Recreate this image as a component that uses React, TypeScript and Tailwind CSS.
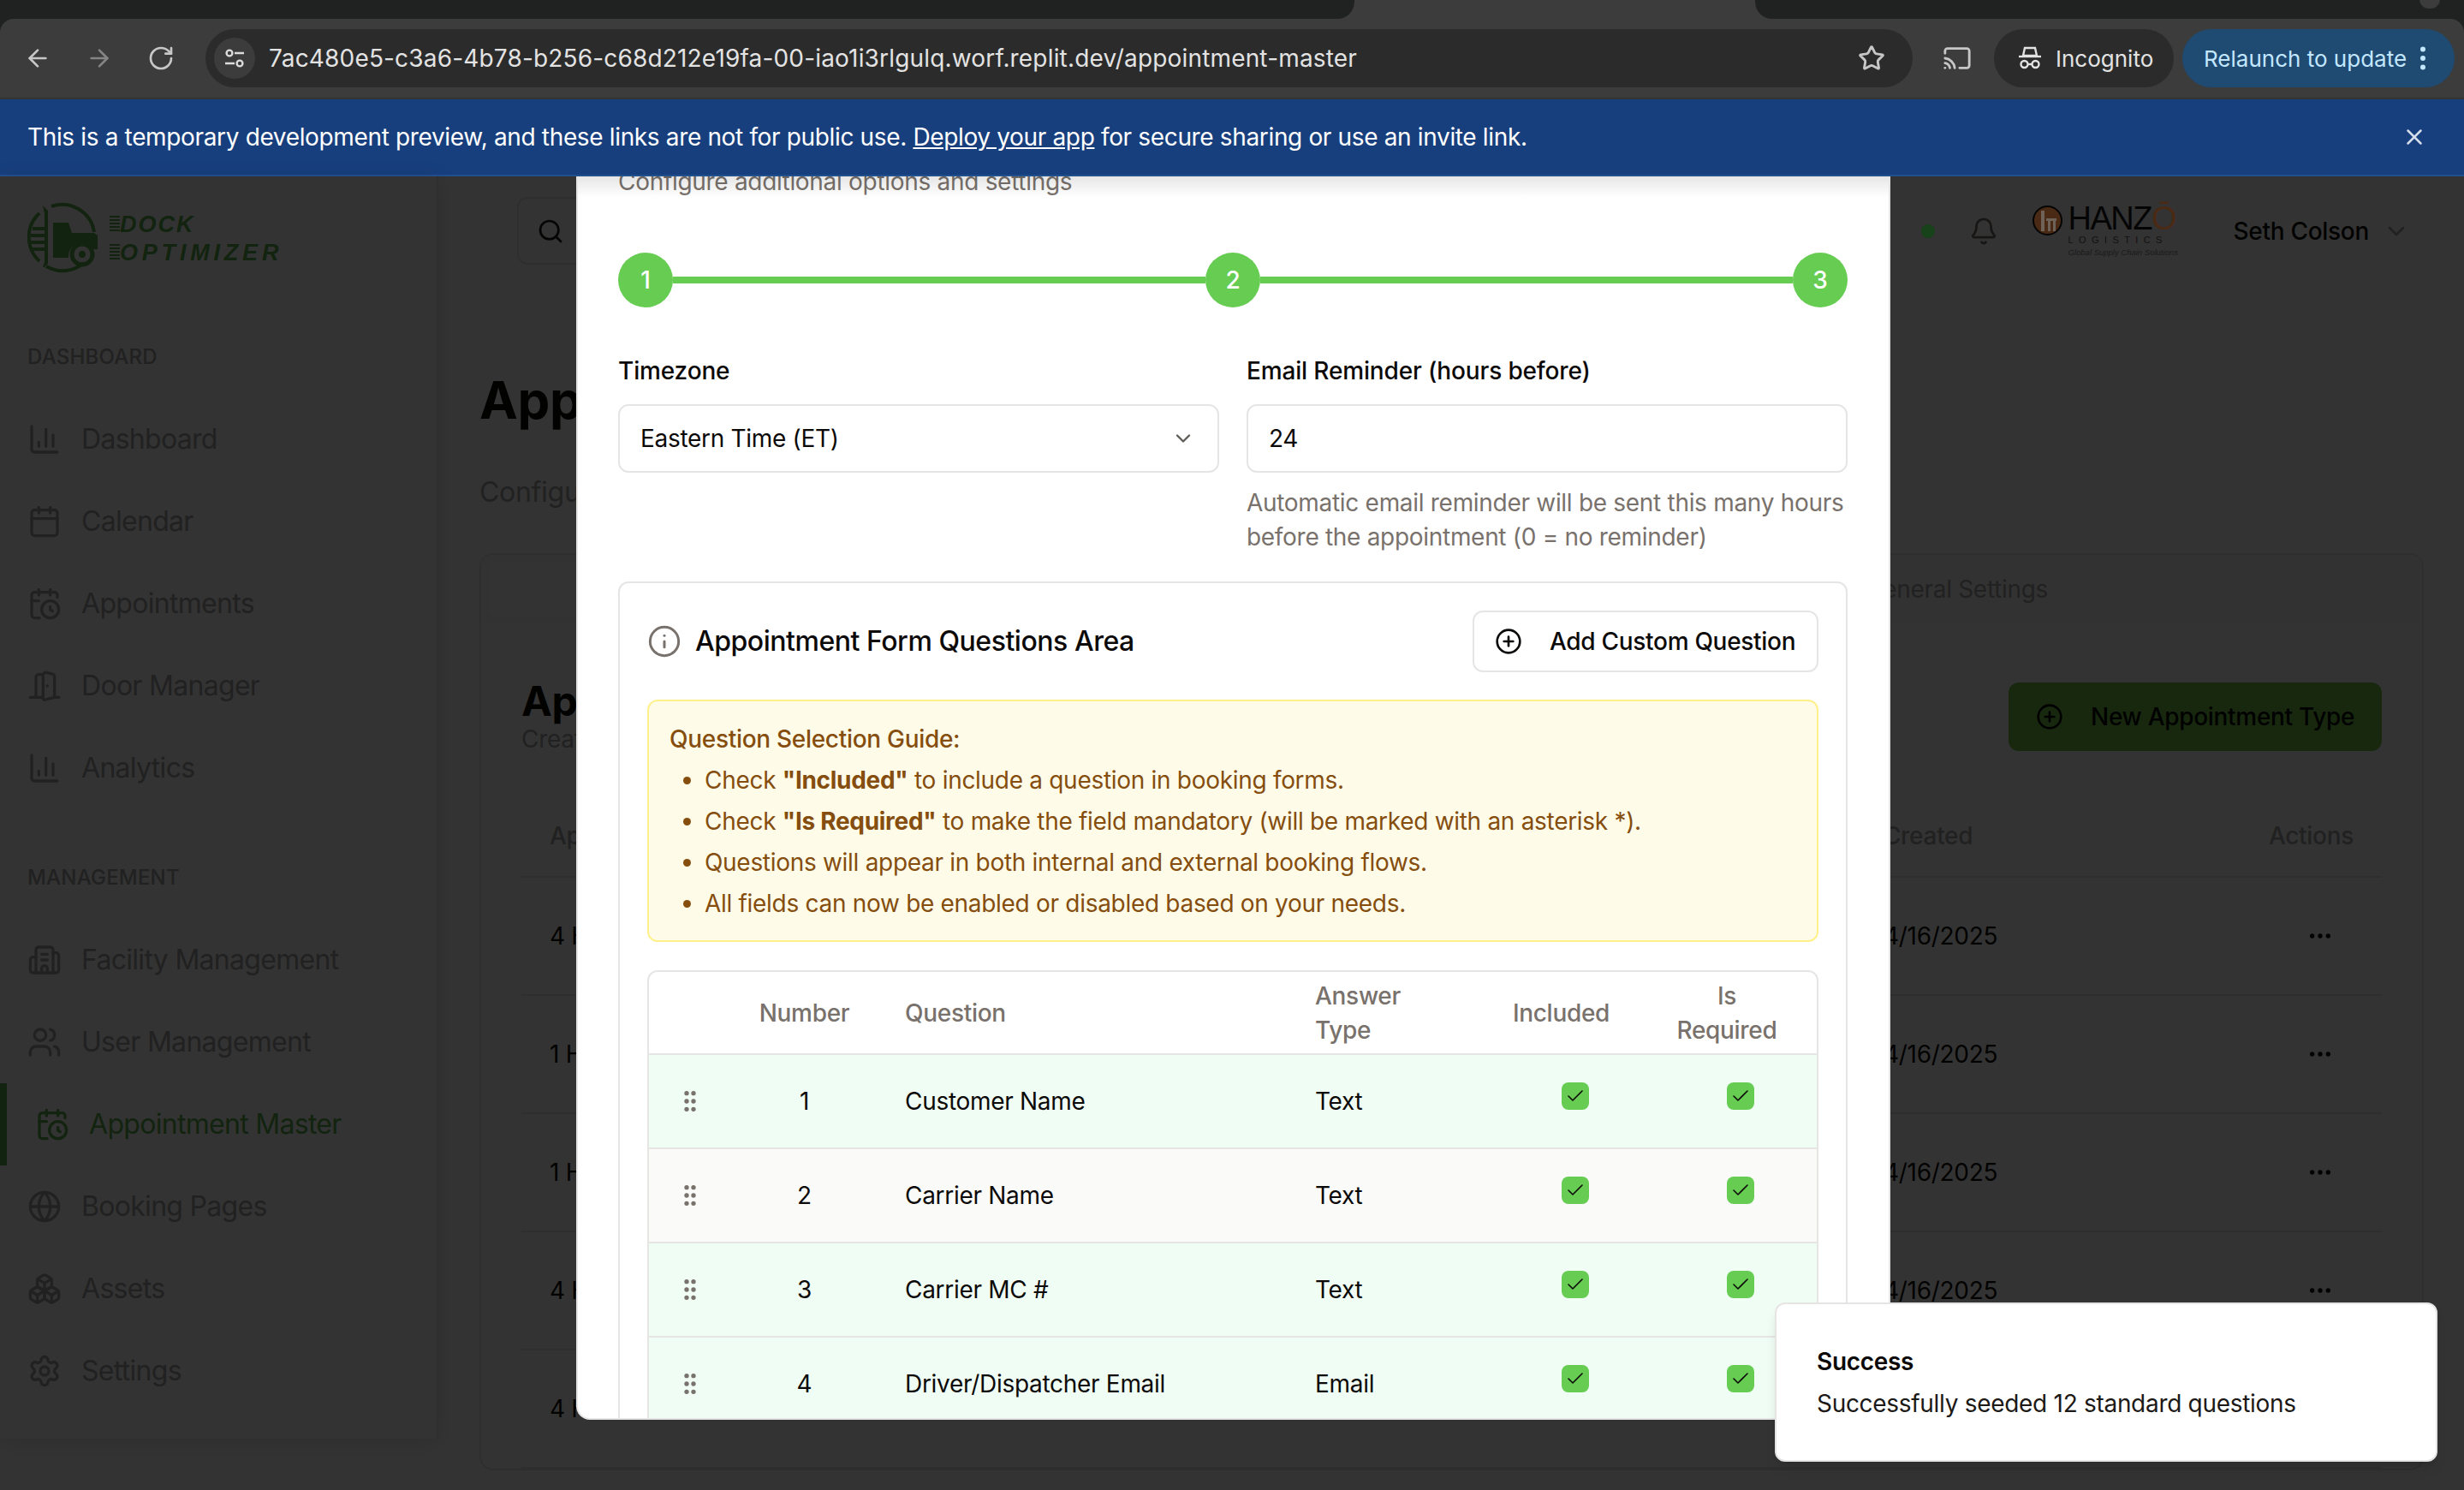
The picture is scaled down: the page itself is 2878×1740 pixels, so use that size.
import {
  ArrowLeft,
  ArrowRight,
  RotateCw,
  Star,
  Cast,
  EllipsisVertical,
  X,
  Search,
  Bell,
  ChevronDown,
  ChartColumn,
  Calendar,
  CalendarClock,
  DoorOpen,
  Building2,
  Users,
  Globe,
  Boxes,
  Settings,
  CirclePlus,
  Info,
  GripVertical,
  Check,
  Ellipsis,
} from 'lucide-react'

const mainNav = [
  { label: 'Dashboard', icon: ChartColumn },
  { label: 'Calendar', icon: Calendar },
  { label: 'Appointments', icon: CalendarClock },
  { label: 'Door Manager', icon: DoorOpen },
  { label: 'Analytics', icon: ChartColumn },
]

const manageNav = [
  { label: 'Facility Management', icon: Building2 },
  { label: 'User Management', icon: Users },
  { label: 'Appointment Master', icon: CalendarClock, active: true },
  { label: 'Booking Pages', icon: Globe },
  { label: 'Assets', icon: Boxes },
  { label: 'Settings', icon: Settings },
]

const typeRows = ['4 Hour Container', '1 Hour Trailer', '1 Hour Live Load', '4 Hour Drop', '4 Hour Reefer']

const questions = [
  { n: 1, q: 'Customer Name', type: 'Text', bg: 'bg-[#f0fdf4]' },
  { n: 2, q: 'Carrier Name', type: 'Text', bg: 'bg-[#fafaf9]' },
  { n: 3, q: 'Carrier MC #', type: 'Text', bg: 'bg-[#f0fdf4]' },
  { n: 4, q: 'Driver/Dispatcher Email', type: 'Email', bg: 'bg-[#f0fdf4]' },
]

function NavItem({ label, icon: Icon, active }: { label: string; icon: typeof Globe; active?: boolean }) {
  if (active) {
    return (
      <div className="flex h-[96px] items-center gap-[23px] border-l-[8px] border-[#5cb04a] pl-[33px] text-[#5cb04a]">
        <Icon size={40} strokeWidth={2} />
        <span className="text-[32px] tracking-[-0.7px]">{label}</span>
      </div>
    )
  }
  return (
    <div className="flex h-[96px] items-center gap-[23px] pl-[32px] text-[#a3a3a3]">
      <Icon size={40} strokeWidth={2} />
      <span className="text-[32px] tracking-[-0.7px]">{label}</span>
    </div>
  )
}

function TruckMark() {
  return (
    <svg width="84" height="84" viewBox="0 0 84 84" fill="none">
      <path d="M28 6 A38 38 0 0 1 78 36" stroke="#5cb04a" strokeWidth="4" />
      <path d="M14 14 A38 38 0 0 0 14 70 M22 76 A38 38 0 0 0 66 72" stroke="#5cb04a" strokeWidth="4" />
      <path d="M6 30h18v4H6zM4 38h20v4H4zM4 46h20v4H4zM6 54h18v4H6z" fill="#5cb04a" />
      <path d="M18 5l6 6v62l-4 4h-2l2-6V15z" fill="#5cb04a" />
      <path d="M30 25h18l4 12h26l4 3v16h-6a15 15 0 0 0-28 8v2H30z" fill="#5cb04a" />
      <circle cx="64" cy="62" r="12" stroke="#5cb04a" strokeWidth="5" />
      <circle cx="64" cy="62" r="4" fill="#5cb04a" />
    </svg>
  )
}

function DockLogo() {
  const speed = 'h-[20px] w-[12px] bg-[repeating-linear-gradient(180deg,#5cb04a_0_2px,transparent_2px_4px)]'
  return (
    <div className="flex items-center gap-[12px] pl-[32px]">
      <TruckMark />
      <div className="mt-[4px] flex flex-col gap-[12px] [font-family:'Liberation_Sans',sans-serif] text-[27px] leading-[21px] font-bold text-[#5cb04a] italic">
        <div className="flex items-center">
          <span className={speed} />
          <span className="tracking-[2px]">DOCK</span>
        </div>
        <div className="flex items-center">
          <span className={speed} />
          <span className="tracking-[4.8px]">OPTIMIZER</span>
        </div>
      </div>
    </div>
  )
}

function HanzoLogo() {
  return (
    <div className="relative z-20 flex w-[173px] gap-[7px] [font-family:'Liberation_Sans',sans-serif] text-[#050505]">
      <svg width="35" height="35" viewBox="0 0 35 35" className="shrink-0">
        <circle cx="17.5" cy="17.5" r="16.5" fill="#4a2a14" stroke="#050505" strokeWidth="2" />
        <path d="M10 6h4v24h-4zM16 15h12v3H16zM18 18h3v12h-3zM24 18h3v12h-3z" fill="#6f6258" />
      </svg>
      <div className="w-[128px]">
        <div className="text-[38px] leading-[30px] tracking-[-1.5px]">
          HANZ<span className="text-[#4a2a14]">Ō</span>
        </div>
        <div className="mt-[5px] text-[11px] leading-[11px] tracking-[6.4px] text-[#111]">LOGISTICS</div>
        <div className="mt-[4px] text-[9.5px] leading-[10px] tracking-normal whitespace-nowrap text-[#1a1a1a] italic">Global Supply Chain Solutions</div>
      </div>
    </div>
  )
}

function BrowserChrome() {
  return (
    <div className="bg-[#202221]">
      <div className="flex h-[22px] bg-[#3c3c3c]">
        <div className="w-[1582px] rounded-br-[20px] bg-[#202221]" />
        <div className="w-[468px]" />
        <div className="relative flex-1 rounded-bl-[20px] bg-[#202221]">
          <div className="absolute top-[-12px] left-[776px] h-[22px] w-[24px] rounded-full bg-[#3c3c3c]" />
        </div>
      </div>
      <div className="flex h-[92px] items-center rounded-t-[16px] bg-[#3c3c3c] pl-[28px] text-[#c7c7c7]">
        <ArrowLeft size={32} />
        <ArrowRight size={32} className="ml-[40px] text-[#858585]" />
        <RotateCw size={32} className="ml-[40px]" />
        <div className="ml-[36px] flex h-[68px] w-[1994px] items-center rounded-full bg-[#2b2b2b] pl-[10px]">
          <div className="flex h-[48px] w-[48px] items-center justify-center rounded-full bg-[#3c3c3c]">
            <svg width="26" height="26" viewBox="0 0 26 26" fill="none" stroke="#dcdcdc" strokeWidth="2.4">
              <circle cx="7" cy="7" r="3.4" />
              <path d="M13 7h11M2 19h11" />
              <circle cx="19" cy="19" r="3.4" />
            </svg>
          </div>
          <span className="ml-[16px] text-[28px] tracking-[0.17px] text-[#e3e3e3]">
            7ac480e5-c3a6-4b78-b256-c68d212e19fa-00-iao1i3rlgulq.worf.replit.dev/appointment-master
          </span>
          <Star size={32} strokeWidth={2.2} className="mr-[32px] ml-auto" />
        </div>
        <Cast size={34} className="ml-[35px]" />
        <div className="ml-[26px] flex h-[68px] w-[210px] items-center rounded-full bg-[#2b2b2b] pl-[27px] text-[#e3e3e3]">
          <svg width="30" height="28" viewBox="0 0 30 28" fill="none" stroke="currentColor" strokeWidth="2.4">
            <path d="M9 2h12l2 9H7z" />
            <path d="M2 12h26" />
            <circle cx="8.5" cy="21" r="4" />
            <circle cx="21.5" cy="21" r="4" />
            <path d="M12.5 21h5" />
          </svg>
          <span className="ml-[15px] text-[26px] tracking-normal">Incognito</span>
        </div>
        <div className="ml-[10px] flex h-[68px] w-[318px] items-center rounded-full bg-[#1f4a72] pl-[25px] text-[#c2e7ff]">
          <span className="text-[26px] tracking-normal whitespace-nowrap">Relaunch to update</span>
          <EllipsisVertical size={36} className="ml-[1px]" />
        </div>
      </div>
      <div className="h-[2px] bg-[#333]" />
      <div className="flex h-[90px] items-center justify-between border-b-2 border-[#21508f] bg-[#183f7d] pr-[43px] pl-[32px] text-[28px] tracking-[-0.35px] text-white">
        <span>
          This is a temporary development preview, and these links are not for public use.{' '}
          <span className="underline">Deploy your app</span> for secure sharing or use an invite link.
        </span>
        <X size={30} className="text-[#d5dcea]" />
      </div>
    </div>
  )
}

function Sidebar() {
  return (
    <aside className="flex h-[1474px] w-[512px] shrink-0 flex-col border-r-2 border-[#e7e5e4] bg-white shadow-[0_4px_24px_rgba(0,0,0,0.12)]">
      <div className="flex h-[127px] items-center pt-[14px]">
        <DockLogo />
      </div>
      <div className="mt-[68px] mb-[32px] pl-[32px] text-[24px] leading-[32px] font-medium tracking-[0.2px] text-[#a3a3a3]">DASHBOARD</div>
      {mainNav.map((n) => (
        <NavItem key={n.label} {...n} />
      ))}
      <div className="mt-[64px] mb-[32px] pl-[32px] text-[24px] leading-[32px] font-medium tracking-[0.2px] text-[#a3a3a3]">MANAGEMENT</div>
      {manageNav.map((n) => (
        <NavItem key={n.label} {...n} />
      ))}
    </aside>
  )
}

function PageBehind() {
  return (
    <main className="min-w-0 flex-1">
      <header className="flex h-[127px] items-center justify-between pr-[63px] pl-[92px]">
        <div className="flex h-[79px] w-[700px] items-center rounded-[12px] border-2 border-[#e7e5e4] pl-[21px] text-[#1c1917]">
          <Search size={32} />
        </div>
        <div className="flex items-center">
          <span className="relative z-20 h-[16px] w-[16px] rounded-full bg-[#17421a]" />
          <Bell size={34} className="ml-[40px] text-[#78716c]" />
          <div className="ml-[40px]">
            <HanzoLogo />
          </div>
          <span className="ml-[62px] text-[28px] font-medium text-[#0c0a09]">Seth Colson</span>
          <ChevronDown size={32} className="ml-[16px] text-[#a3a3a3]" />
        </div>
      </header>
      <div className="pr-[47px] pl-[48px]">
        <h1 className="mt-[98px] text-[60px] leading-[72px] font-bold text-[#0c0a09]">Appointment Master</h1>
        <p className="mt-[48px] text-[32px] leading-[48px] text-[#a3a3a3]">Configure appointment types and scheduling rules</p>
        <section className="mt-[47px] rounded-[16px] border-2 border-[#e7e5e4]">
          <div className="flex h-[80px] items-center justify-between rounded-[12px] bg-[#fafaf9] pr-[437px] pl-[8px] text-[28px] text-[#a3a3a3]">
            <div className="flex h-[62px] w-[620px] items-center justify-center rounded-[10px] bg-white text-[#0c0a09]">Appointment Types</div>
            <span>General Settings</span>
          </div>
          <div className="flex items-start justify-between pt-[67px] pr-[47px] pl-[47px]">
            <div>
              <h2 className="text-[48px] leading-[48px] font-bold text-[#0c0a09]">Appointment Types</h2>
              <p className="text-[28px] leading-[40px] text-[#a3a3a3]">Create and manage appointment types</p>
            </div>
            <button className="mt-[2px] flex h-[80px] w-[436px] items-center gap-[32px] rounded-[12px] bg-[#73c84b] pl-[32px] text-[28px] font-medium text-[#050505]">
              <CirclePlus size={32} />
              New Appointment Type
            </button>
          </div>
          <div className="mx-[47px] mt-[46px]">
            <div className="flex h-[96px] items-center border-b-2 border-[#e7e5e4] px-[33px] text-[28px] font-medium text-[#a3a3a3]">
              <span className="flex-1">Appointment Type</span>
              <span className="w-[450px]">Created</span>
              <span>Actions</span>
            </div>
            {typeRows.map((r) => (
              <div key={r} className="flex h-[138px] items-center border-b-2 border-[#e7e5e4] pl-[33px] text-[28px] text-[#0c0a09]">
                <span className="flex-1">{r}</span>
                <span className="w-[494px]">4/16/2025</span>
                <Ellipsis size={32} className="mr-[56px]" />
              </div>
            ))}
          </div>
        </section>
      </div>
    </main>
  )
}

function Tick() {
  return (
    <span className="mb-[12px] ml-[32px] inline-flex h-[32px] w-[32px] items-center justify-center rounded-[8px] bg-[#66cc52] align-middle text-[#0c0a09]">
      <Check size={24} strokeWidth={1.6} />
    </span>
  )
}

function Step({ n }: { n: number }) {
  return <div className="flex h-[64px] w-[64px] shrink-0 items-center justify-center rounded-full bg-[#66cc52] text-[28px] font-medium text-white">{n}</div>
}

function Modal() {
  return (
    <div className="absolute top-0 left-[673px] z-30 h-[1452px] w-[1535px] overflow-hidden rounded-b-[16px] border-2 border-t-0 border-[#e7e5e4] bg-white pr-[48px] pl-[47px]">
      <div className="pointer-events-none absolute inset-x-0 top-0 h-[24px] bg-gradient-to-b from-black/10 to-transparent" />
      <p className="-mt-[14px] text-[28px] leading-[40px] text-[#78716c]">Configure additional options and settings</p>

      <div className="mt-[63px] flex items-center">
        <Step n={1} />
        <div className="h-[8px] flex-1 bg-[#66cc52]" />
        <Step n={2} />
        <div className="h-[8px] flex-1 bg-[#66cc52]" />
        <Step n={3} />
      </div>

      <div className="mt-[54px] grid grid-cols-2 gap-[32px] text-[28px] leading-[40px]">
        <div>
          <label className="font-medium tracking-[-0.15px] text-[#0c0a09]">Timezone</label>
          <div className="mt-[19px] flex h-[80px] items-center justify-between rounded-[12px] border-2 border-[#e7e5e4] pr-[26px] pl-[24px] text-[#0c0a09]">
            Eastern Time (ET)
            <ChevronDown size={28} className="text-[#5f5b57]" />
          </div>
        </div>
        <div>
          <label className="font-medium tracking-[-0.15px] text-[#0c0a09]">Email Reminder (hours before)</label>
          <div className="mt-[19px] flex h-[80px] items-center rounded-[12px] border-2 border-[#e7e5e4] px-[24px] text-[#0c0a09]">24</div>
          <p className="mt-[15px] text-[#78716c]">Automatic email reminder will be sent this many hours before the appointment (0 = no reminder)</p>
        </div>
      </div>

      <div className="mt-[32px] rounded-[12px] border-2 border-[#e7e5e4] px-[32px] pt-[32px] pb-[40px]">
        <div className="flex items-center justify-between">
          <div className="flex items-center gap-[16px]">
            <Info size={40} strokeWidth={1.8} className="text-[#78716c]" />
            <h3 className="text-[32px] font-medium tracking-[-0.47px] text-[#0c0a09]">Appointment Form Questions Area</h3>
          </div>
          <button className="flex h-[72px] w-[404px] items-center gap-[32px] rounded-[12px] border-2 border-[#e7e5e4] pl-[24px] text-[28px] font-medium text-[#0c0a09]">
            <CirclePlus size={32} />
            Add Custom Question
          </button>
        </div>

        <div className="mt-[32px] rounded-[12px] border-2 border-[#fef08a] bg-[#fefce8] pt-[20px] pr-[24px] pb-[19px] pl-[24px] text-[28px] leading-[48px] text-[#854d0e]">
          <p className="font-medium">Question Selection Guide:</p>
          <ul className="list-disc pl-[41px]">
            <li>
              Check <strong>"Included"</strong> to include a question in booking forms.
            </li>
            <li>
              Check <strong>"Is Required"</strong> to make the field mandatory (will be marked with an asterisk *).
            </li>
            <li>Questions will appear in both internal and external booking flows.</li>
            <li>All fields can now be enabled or disabled based on your needs.</li>
          </ul>
        </div>

        <div className="mt-[33px] overflow-hidden rounded-[12px] border-2 border-[#e7e5e4]">
          <table className="w-full table-fixed border-collapse text-[28px] leading-[40px]">
            <colgroup>
              <col className="w-[96px]" />
              <col className="w-[171px]" />
              <col className="w-[479px]" />
              <col className="w-[231px]" />
              <col className="w-[177px]" />
              <col />
            </colgroup>
            <thead>
              <tr className="h-[96px] border-b-2 border-[#e7e5e4] font-medium text-[#78716c]">
                <th />
                <th className="font-medium">Number</th>
                <th className="px-[32px] text-left font-medium">Question</th>
                <th className="px-[32px] text-left font-medium">Answer Type</th>
                <th className="font-medium">Included</th>
                <th className="px-[32px] font-medium">Is Required</th>
              </tr>
            </thead>
            <tbody>
              {questions.map((r) => (
                <tr key={r.n} className={`h-[110px] border-b-2 border-[#e7e5e4] text-[#0c0a09] ${r.bg}`}>
                  <td className="text-center">
                    <GripVertical size={32} className="mx-auto text-[#78716c]" />
                  </td>
                  <td className="text-center">{r.n}</td>
                  <td className="px-[32px]">{r.q}</td>
                  <td className="px-[32px]">{r.type}</td>
                  <td className="text-center">
                    <Tick />
                  </td>
                  <td className="text-center">
                    <Tick />
                  </td>
                </tr>
              ))}
            </tbody>
          </table>
        </div>
      </div>
    </div>
  )
}

export default function App() {
  return (
    <div className="flex h-[1740px] w-[2878px] flex-col overflow-hidden bg-white tracking-[-0.3px] [font-family:Inter,sans-serif]">
      <BrowserChrome />
      <div className="relative flex min-h-0 flex-1">
        <Sidebar />
        <PageBehind />
        <div className="absolute inset-0 z-10 bg-black/80" />
        <Modal />
        <div className="absolute top-[1315px] left-[2073px] z-40 flex h-[186px] w-[774px] flex-col justify-center rounded-[12px] border-2 border-[#e7e5e4] bg-white pl-[47px] text-[28px] leading-[40px] text-[#0c0a09] shadow-lg">
          <p className="font-semibold">Success</p>
          <p className="mt-[9px] text-[#1c1917]">Successfully seeded 12 standard questions</p>
        </div>
      </div>
    </div>
  )
}
